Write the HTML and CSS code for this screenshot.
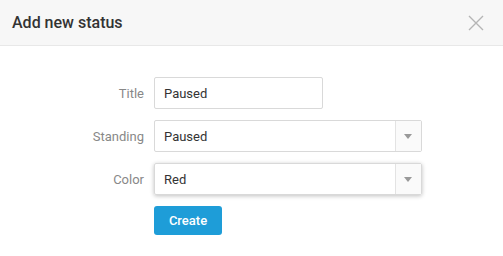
FILE: index.html
```html
<!DOCTYPE html>
<html lang="en">
<head>
  <meta charset="UTF-8">
  <title>Add new status</title>
  <link rel="stylesheet" href="styles.css">
</head>
<body>
  <div class="modal">
    <div class="modal-header">
      <h3>Add new status</h3>
      <span class="close">
        <svg width="16" height="16" viewBox="0 0 16 16"><path d="M1 1L15 15M15 1L1 15" stroke="#b5b5b5" stroke-width="1.4" fill="none"/></svg>
      </span>
    </div>
    <form class="modal-body">
      <div class="row">
        <label>Title</label>
        <input type="text" class="input short" value="Paused">
      </div>
      <div class="row">
        <label>Standing</label>
        <div class="select">
          <span class="value">Paused</span>
          <span class="arrow"></span>
        </div>
      </div>
      <div class="row">
        <label>Color</label>
        <div class="select focused">
          <span class="value">Red</span>
          <span class="arrow"></span>
        </div>
      </div>
      <div class="row">
        <label></label>
        <button type="button">Create</button>
      </div>
    </form>
  </div>
</body>
</html>
```

FILE: styles.css
```css
body {
  margin: 0;
  font-family: Roboto, "Liberation Sans", sans-serif;
  background-color: #fff;
  color: #333;
}

.modal-header {
  height: 46px;
  box-sizing: border-box;
  background-color: #f7f7f7;
  border-bottom: 1px solid #e8e8e8;
  display: flex;
  align-items: center;
  justify-content: space-between;
  padding: 0 19px 0 12px;
}

.modal-header h3 {
  margin: 0;
  font-size: 16px;
  font-weight: 500;
  color: #333;
}

.close {
  display: flex;
}

.modal-body {
  padding-top: 31px;
  display: flex;
  flex-direction: column;
  gap: 11px;
}

.row {
  display: flex;
  align-items: center;
}

.row label {
  width: 154px;
  flex-shrink: 0;
  padding-right: 10px;
  box-sizing: border-box;
  text-align: right;
  font-size: 13px;
  color: #888;
}

.input {
  height: 32px;
  box-sizing: border-box;
  border: 1px solid #d9d9d9;
  border-radius: 2px;
  padding: 0 9px;
  font-family: inherit;
  font-size: 13px;
  color: #333;
  outline: none;
}

.short {
  width: 169px;
}

.select {
  width: 268px;
  height: 32px;
  box-sizing: border-box;
  border: 1px solid #d9d9d9;
  border-radius: 2px;
  display: flex;
  font-size: 13px;
}

.select.focused {
  box-shadow: 0 1px 4px rgba(0, 0, 0, 0.25);
}

.select .value {
  flex: 1;
  display: flex;
  align-items: center;
  padding-left: 9px;
}

.select .arrow {
  width: 25px;
  border-left: 1px solid #e3e3e3;
  background-color: #fafafa;
  position: relative;
}

.select .arrow::after {
  content: "";
  position: absolute;
  left: 8px;
  top: 13px;
  border-left: 4px solid transparent;
  border-right: 4px solid transparent;
  border-top: 5px solid #999;
}

button {
  height: 29px;
  width: 68px;
  border: none;
  border-radius: 3px;
  background-color: #1e9dd8;
  color: #fff;
  font-family: inherit;
  font-size: 13px;
  font-weight: 500;
  cursor: pointer;
}
```
